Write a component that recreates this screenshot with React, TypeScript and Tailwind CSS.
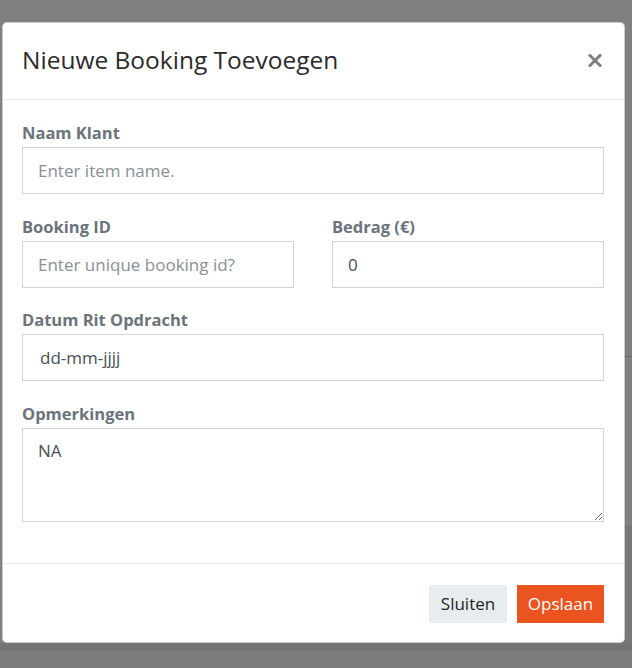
import { useState } from "react";

const font = { fontFamily: "'Open Sans', 'Noto Sans', sans-serif" };

function Field({ label, children }: { label: string; children: React.ReactNode }) {
  return (
    <div className="flex flex-col">
      <label className="text-[16.5px] leading-[24px] font-bold text-[#6b737b] mb-[2px]">{label}</label>
      {children}
    </div>
  );
}

const inputCls =
  "w-full h-[47px] border border-[#ced4da] bg-white px-[15px] text-[17px] text-[#495057] placeholder:text-[#8a9096] outline-none";

export default function App() {
  const [naam, setNaam] = useState("");
  const [bookingId, setBookingId] = useState("");
  const [bedrag, setBedrag] = useState("0");
  const [datum, setDatum] = useState("dd-mm-jjjj");
  const [opm, setOpm] = useState("NA");

  return (
    <div className="relative w-[632px] h-[668px] overflow-hidden bg-[#808080]" style={font}>
      {/* page behind the backdrop */}
      <div className="absolute right-0 top-[356px] w-[10px] h-[1px] bg-[#6c6c6c]" />
      <div className="absolute right-0 top-[525px] w-[10px] h-[125px] bg-[#787878]" />
      <div className="absolute left-0 right-0 top-[643px] h-[7px] bg-[#747474]" />
      <div className="absolute left-0 right-0 top-[650px] bottom-0 bg-[#7c7c7c]" />

      {/* modal */}
      <div className="absolute left-[2px] top-[22px] w-[623px] h-[621px] bg-white rounded-[5px] border border-black/20 flex flex-col">
        <div className="h-[77px] border-b border-[#e9ecef] flex items-center justify-between pl-[19px] pr-[20px]">
          <h5 className="text-[24.5px] leading-none text-[#2b2b2b] mt-[-1px]">Nieuwe Booking Toevoegen</h5>
          <button className="w-[16px] h-[16px] flex items-center justify-center mt-[-2px] mr-[1px]">
            <svg width="14" height="13" viewBox="0 0 14 13">
              <path d="M2 1.5 L12 11.5 M12 1.5 L2 11.5" stroke="#7f7f7f" strokeWidth="3" strokeLinecap="square" />
            </svg>
          </button>
        </div>

        <div className="flex-1 pl-[19px] pr-[20px] pt-[21px] flex flex-col gap-[20.5px]">
          <Field label="Naam Klant">
            <input className={inputCls} placeholder="Enter item name." value={naam} onChange={(e) => setNaam(e.target.value)} />
          </Field>
          <div className="grid grid-cols-2 gap-[38px]">
            <Field label="Booking ID">
              <input className={inputCls} placeholder="Enter unique booking id?" value={bookingId} onChange={(e) => setBookingId(e.target.value)} />
            </Field>
            <Field label="Bedrag (€)">
              <input className={inputCls} value={bedrag} onChange={(e) => setBedrag(e.target.value)} />
            </Field>
          </div>
          <Field label="Datum Rit Opdracht">
            <input className={inputCls + " pl-[17px]"} value={datum} onChange={(e) => setDatum(e.target.value)} />
          </Field>
          <Field label="Opmerkingen">
            <textarea
              className="w-full h-[94px] border border-[#ced4da] bg-white px-[15px] py-[9px] text-[17px] leading-[25px] text-[#495057] outline-none"
              value={opm}
              onChange={(e) => setOpm(e.target.value)}
            />
          </Field>
        </div>

        <div className="border-t border-[#e9ecef] pt-[21px] pb-[19px] pr-[20px] flex justify-end gap-[10px]">
          <button className="h-[38px] w-[78px] bg-[#e9ecef] text-[#212529] text-[17px]">Sluiten</button>
          <button className="h-[38px] w-[87px] bg-[#e95420] text-white text-[17px]">Opslaan</button>
        </div>
      </div>
    </div>
  );
}
